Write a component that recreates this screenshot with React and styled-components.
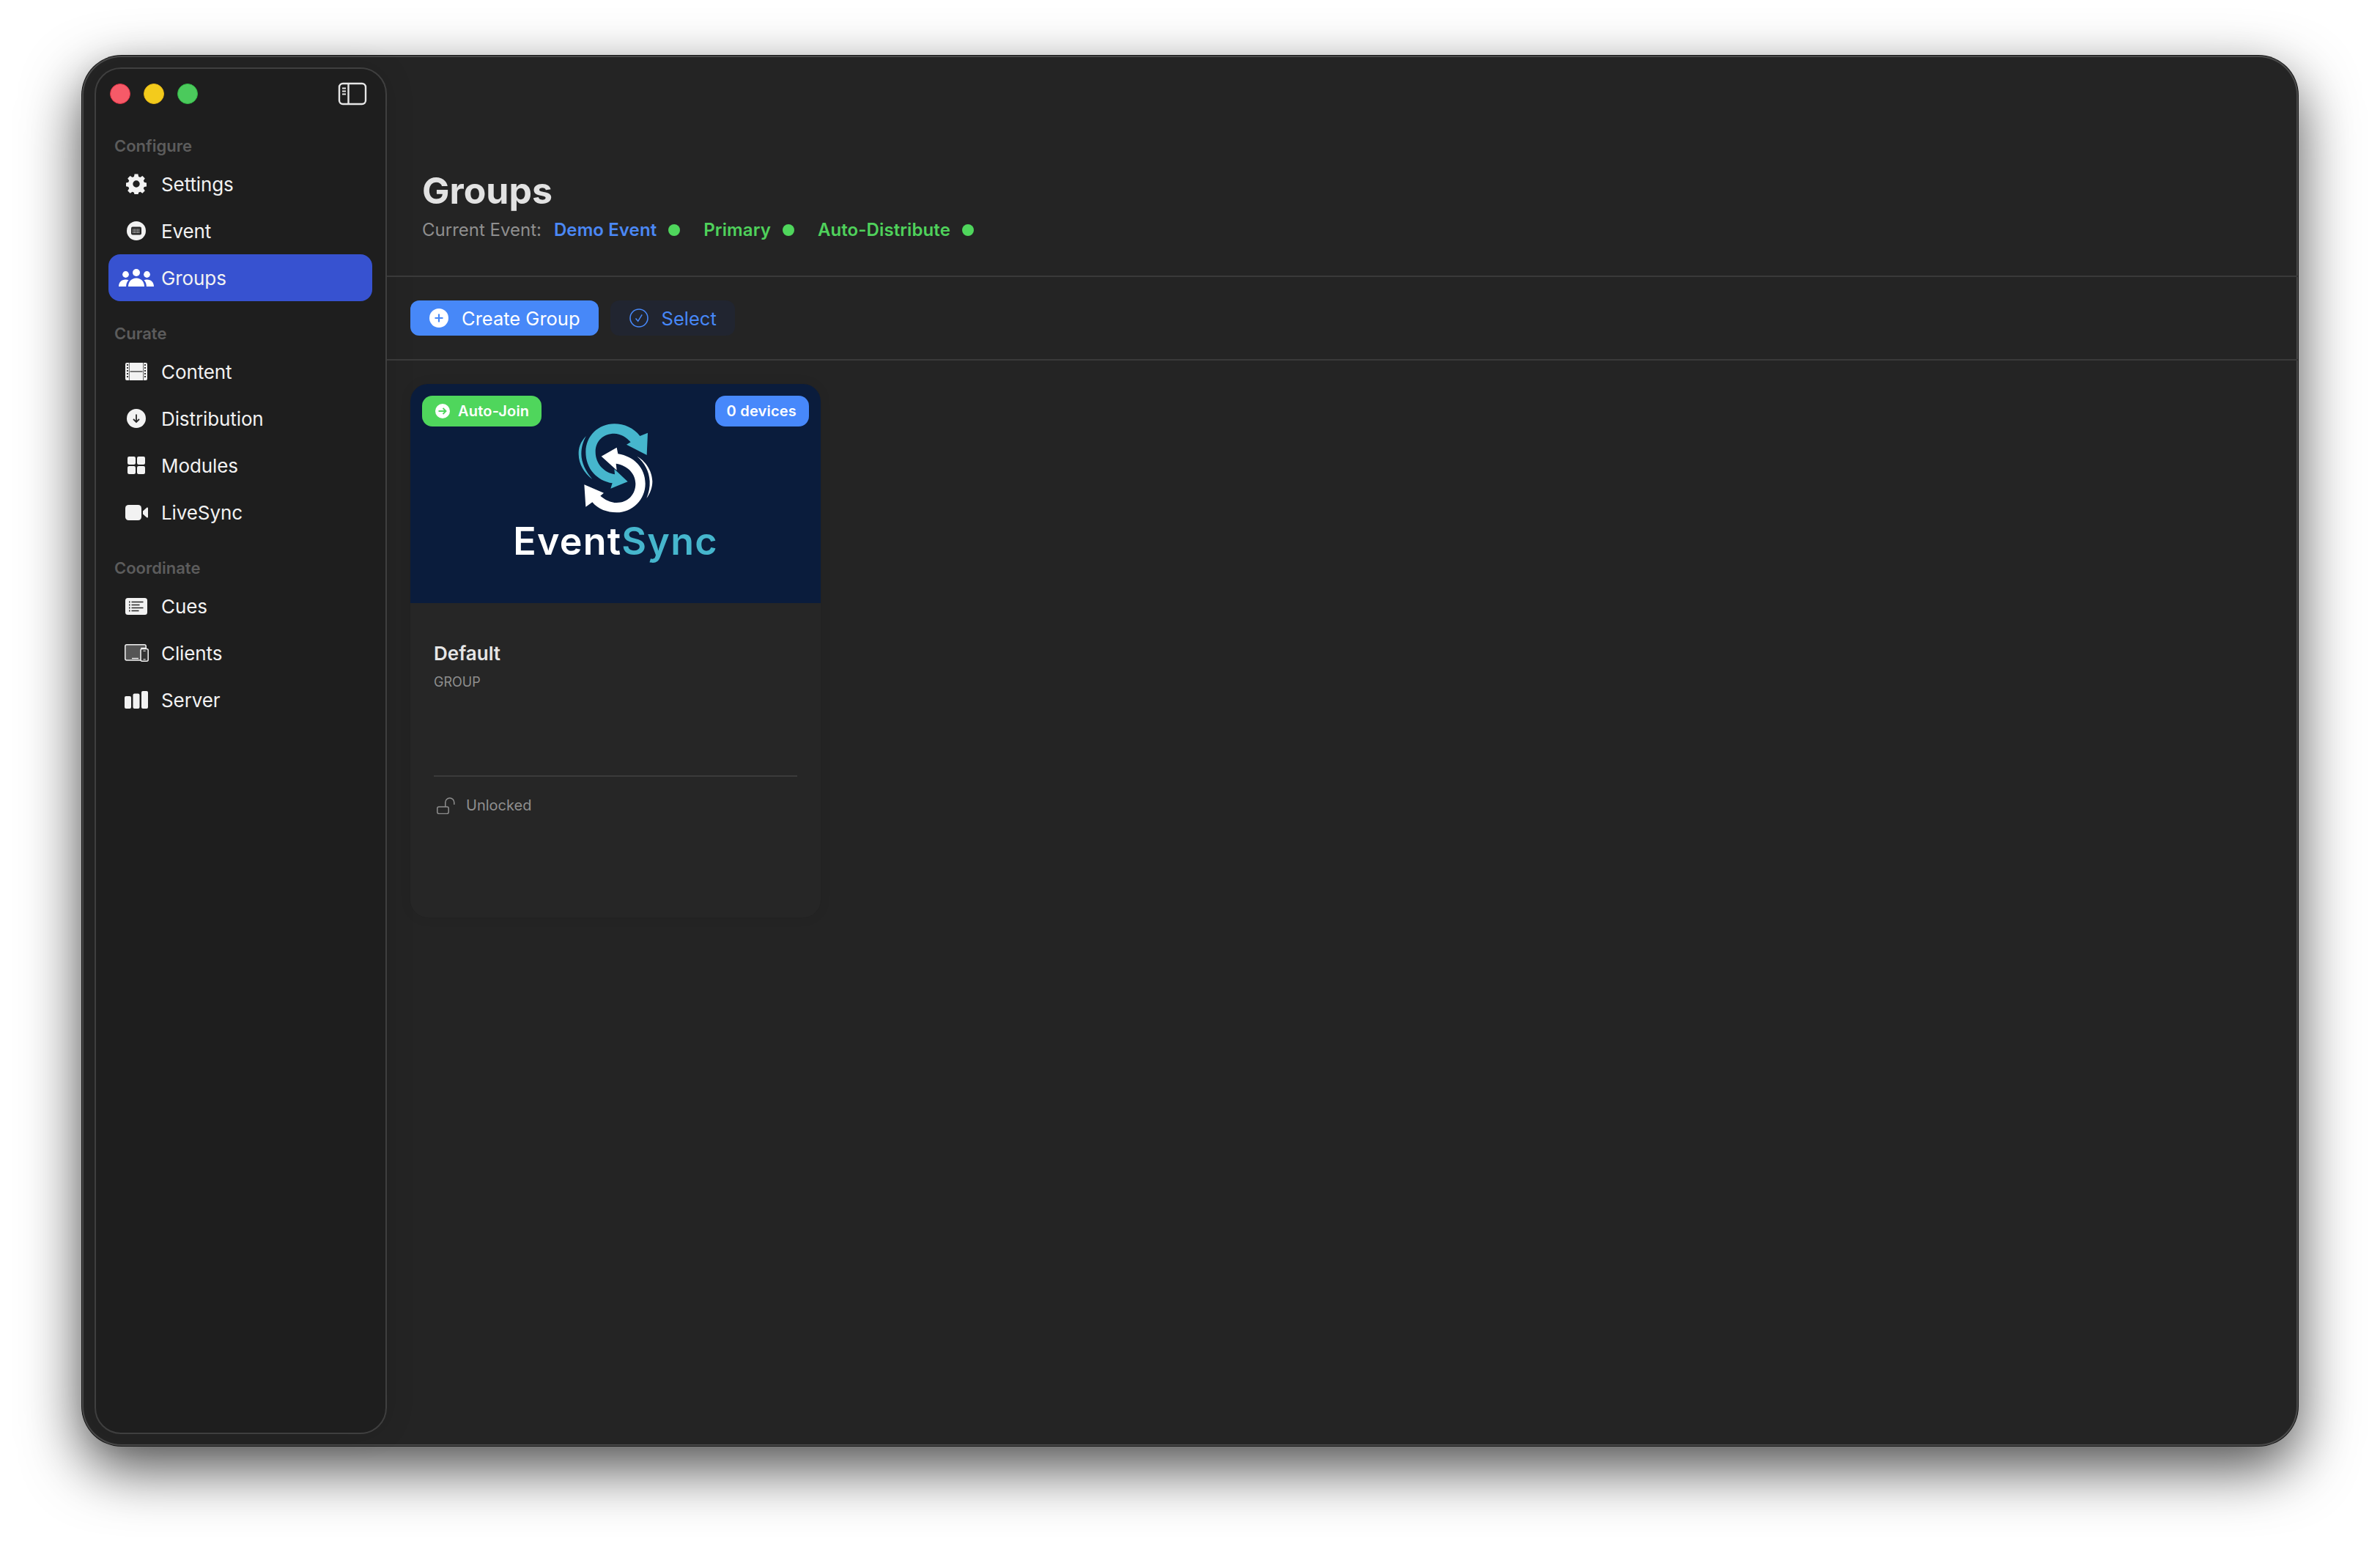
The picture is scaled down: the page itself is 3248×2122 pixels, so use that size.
import styled, { createGlobalStyle } from "styled-components";

const GlobalStyle = createGlobalStyle`
  html, body {
    margin: 0;
    background: #ffffff;
  }
  * {
    box-sizing: border-box;
  }
  #root {
    font-family: "Inter", "Liberation Sans", sans-serif;
    -webkit-font-smoothing: antialiased;
  }
`;

function SidebarToggle() {
  return (
    <svg width="40" height="32" viewBox="0 0 40 32" fill="none">
      <rect x="2" y="2" width="36" height="28" rx="5" stroke="#e6e6e6" strokeWidth="2.4" />
      <path d="M14.5 2v28" stroke="#e6e6e6" strokeWidth="2.4" />
      <path d="M6 8.5h5M6 12.5h5M6 16.500h5" stroke="#e6e6e6" strokeWidth="1.8" />
    </svg>
  );
}

function GearIcon() {
  return (
    <svg width="28" height="28" viewBox="0 0 28 28">
      <path
        fill="#f2f2f2"
        fillRule="evenodd"
        d="M11.6 .6h4.800l.7 3.500 2.300 1 3-2 3.400 3.400-2 3 1 2.300 3.600.7v4.800l-3.600.7-1 2.300 2 3-3.400 3.400-3-2-2.300 1-.7 3.600h-4.800l-.7-3.600-2.300-1-3 2-3.400-3.400 2-3-1-2.300-3.500-.7v-4.800l3.500-.7 1-2.300-2-3 3.400-3.400 3 2 2.300-1z M14 9.300a4.700 4.700 0 1 0 0 9.400a4.700 4.700 0 0 0 0-9.400z"
      />
    </svg>
  );
}

function EventIcon() {
  return (
    <svg width="26" height="26" viewBox="0 0 26 26">
      <circle cx="13" cy="13" r="13" fill="#f2f2f2" />
      <rect x="6" y="7.500" width="14" height="11" rx="2" fill="#2a2a2a" />
      <path d="M8 11h10M8 13.200h10M8 15.400h10" stroke="#d8d8d8" strokeWidth="1.200" strokeDasharray="1.300 .7" />
    </svg>
  );
}

function GroupsIcon() {
  return (
    <svg width="48" height="24" viewBox="0 0 48 24" fill="#ffffff">
      <circle cx="9.500" cy="7.500" r="4.400" />
      <circle cx="24" cy="5" r="5" />
      <circle cx="38.500" cy="7.500" r="4.400" />
      <path d="M0 24c0-5.500 3.500-9.500 9.500-9.500 1.500 0 2.900.3 4 .8-2.200 2-3.300 4.900-3.400 8.700z" />
      <path d="M13 24c0-6.500 4.500-11.500 11-11.500s11 5 11 11.500z" />
      <path d="M48 24c0-5.500-3.500-9.500-9.500-9.500-1.500 0-2.900.3-4 .8 2.200 2 3.300 4.900 3.400 8.700z" />
    </svg>
  );
}

function ContentIcon() {
  return (
    <svg width="30" height="24" viewBox="0 0 30 24">
      <rect width="30" height="24" rx="2" fill="#f2f2f2" />
      <path d="M3 2v20M27 2v20" stroke="#262626" strokeWidth="1.800" strokeDasharray="2 2" />
      <path d="M6.500 12h17" stroke="#262626" strokeWidth="1.200" />
      <path d="M5.400 0v24M24.600 0v24" stroke="#262626" strokeWidth=".7" />
    </svg>
  );
}

function DistributionIcon() {
  return (
    <svg width="26" height="26" viewBox="0 0 26 26">
      <circle cx="13" cy="13" r="13" fill="#f2f2f2" />
      <path d="M13 7.500v10M9 14l4 4 4-4" fill="none" stroke="#262626" strokeWidth="1.800" />
    </svg>
  );
}

function ModulesIcon() {
  return (
    <svg width="24" height="24" viewBox="0 0 24 24" fill="#f2f2f2">
      <rect width="11" height="11" rx="2.200" />
      <rect x="13" width="11" height="11" rx="2.200" />
      <rect y="13" width="11" height="11" rx="2.200" />
      <rect x="13" y="13" width="11" height="11" rx="2.200" />
    </svg>
  );
}

function LiveSyncIcon() {
  return (
    <svg width="31" height="21" viewBox="0 0 31 21" fill="#f2f2f2">
      <rect width="22" height="21" rx="4.500" />
      <path d="M24 8.500l5-4.500c1-.8 2-.4 2 .8v11.400c0 1.200-1 1.600-2 .8l-5-4.500z" />
    </svg>
  );
}

function CuesIcon() {
  return (
    <svg width="30" height="23" viewBox="0 0 30 23">
      <rect width="30" height="23" rx="3.500" fill="#f2f2f2" />
      <path d="M5 5.500h1.500M5 9.500h1.500M5 13.500h1.500M5 17.500h1.500" stroke="#262626" strokeWidth="2" />
      <path d="M8.500 5.500h16M8.500 9.500h11M8.500 13.500h16M8.500 17.500h10" stroke="#262626" strokeWidth="1.400" />
    </svg>
  );
}

function ClientsIcon() {
  return (
    <svg width="33" height="24" viewBox="0 0 33 24">
      <path d="M3 .8h24c1.300 0 2.200 1 2.200 2.200v2.500h-6.200v16.500H3c-1.300 0-2.200-1-2.200-2.200V3C.8 1.800 1.700.8 3 .8z" fill="#555" stroke="#f2f2f2" strokeWidth="1.500" />
      <path d="M10 19.500h9" stroke="#f2f2f2" strokeWidth="1.400" />
      <rect x="22" y="6.500" width="10.200" height="16.700" rx="2" fill="#333" stroke="#f2f2f2" strokeWidth="1.500" />
      <path d="M25.500 9.200h3.200M25.500 20.700h3.200" stroke="#f2f2f2" strokeWidth="1.100" />
    </svg>
  );
}

function ServerIcon() {
  return (
    <svg width="32" height="24" viewBox="0 0 32 24" fill="#f2f2f2">
      <rect y="7" width="9" height="17" rx="2" />
      <rect x="11.500" y="3.500" width="9" height="20.500" rx="2" />
      <rect x="23" width="9" height="24" rx="2" />
    </svg>
  );
}

function PlusCircleIcon() {
  return (
    <svg width="26" height="26" viewBox="0 0 26 26">
      <circle cx="13" cy="13" r="13" fill="#ffffff" />
      <path d="M13 7.500v11M7.500 13h11" stroke="#4788f8" strokeWidth="2.200" />
    </svg>
  );
}

function CheckCircleIcon() {
  return (
    <svg width="26" height="26" viewBox="0 0 26 26" fill="none" stroke="#4788f8">
      <circle cx="13" cy="13" r="12" strokeWidth="1.600" />
      <path d="M8.500 13.500l3.200 3.800 5.500-9" strokeWidth="1.500" />
    </svg>
  );
}

function JoinIcon() {
  return (
    <svg width="20" height="20" viewBox="0 0 20 20">
      <circle cx="10" cy="10" r="10" fill="#ffffff" />
      <path d="M4.500 10h10M10.500 6l4 4-4 4" fill="none" stroke="#4fd65c" strokeWidth="1.900" />
    </svg>
  );
}

function LockIcon() {
  return (
    <svg width="25" height="23" viewBox="0 0 25 23" fill="none" stroke="#8f8f8f" strokeWidth="1.500">
      <rect x=".8" y="13" width="15.400" height="9.400" rx="2.200" />
      <path d="M11.800 13V7a6 6 0 0 1 12 0v3" />
    </svg>
  );
}

function LogoMark() {
  return (
    <svg width="200" height="150" viewBox="0 0 600 450">
      <g fill="#46b6cd">
        <path d="M400 105C375 72 335 55 295 55C230 55 178 105 178 170C178 240 225 288 287 298L280 320L350 292L295 240L297 262C255 255 218 220 218 170C218 125 250 95 295 95C320 95 345 110 362 130L345 140L428 183L432 92Z" />
        <path d="M180 105C155 130 148 155 149 180C150 220 170 255 205 282C178 250 160 215 160 178C160 150 168 125 180 105Z" />
      </g>
      <g fill="#ffffff">
        <path d="M205 376C230 405 265 418 305 418C370 418 422 365 422 300C422 235 375 188 310 178L305 152L242 188L305 245L302 218C350 225 382 260 382 300C382 345 350 378 305 378C280 378 255 365 238 350L252 338L172 304L178 395Z" />
        <path d="M388 188C420 205 450 245 451 290C451 315 442 340 427 360C437 335 441 315 440 290C438 250 420 215 388 188Z" />
      </g>
    </svg>
  );
}

const NAV_SECTIONS = [
  {
    title: "Configure",
    items: [
      { label: "Settings", icon: GearIcon },
      { label: "Event", icon: EventIcon },
      { label: "Groups", icon: GroupsIcon, active: true },
    ],
  },
  {
    title: "Curate",
    items: [
      { label: "Content", icon: ContentIcon },
      { label: "Distribution", icon: DistributionIcon },
      { label: "Modules", icon: ModulesIcon },
      { label: "LiveSync", icon: LiveSyncIcon },
    ],
  },
  {
    title: "Coordinate",
    items: [
      { label: "Cues", icon: CuesIcon },
      { label: "Clients", icon: ClientsIcon },
      { label: "Server", icon: ServerIcon },
    ],
  },
];

export default function App() {
  return (
    <>
      <GlobalStyle />
      <Page>
        <Window>
          <Sidebar>
            <TitleBar>
              <Lights>
                <Light $fill="#f65a68" $edge="#dc3044" />
                <Light $fill="#f3cb1c" $edge="#e3b414" />
                <Light $fill="#4bca5c" $edge="#30b544" />
              </Lights>
              <SidebarToggle />
            </TitleBar>
            {NAV_SECTIONS.map((section) => (
              <NavSection key={section.title}>
                <SectionTitle>{section.title}</SectionTitle>
                {section.items.map((item) => (
                  <NavItem key={item.label} $active={item.active}>
                    <NavIcon>
                      <item.icon />
                    </NavIcon>
                    {item.label}
                  </NavItem>
                ))}
              </NavSection>
            ))}
          </Sidebar>

          <Main>
            <Header>
              <Title>Groups</Title>
              <StatusRow>
                <Muted>Current Event:</Muted>
                <Status $color="#4b88f5">
                  Demo Event
                  <Dot />
                </Status>
                <Status $color="#4fd15b">
                  Primary
                  <Dot />
                </Status>
                <Status $color="#4fd15b">
                  Auto-Distribute
                  <Dot />
                </Status>
              </StatusRow>
            </Header>

            <Toolbar>
              <PrimaryButton>
                <PlusCircleIcon />
                Create Group
              </PrimaryButton>
              <GhostButton>
                <CheckCircleIcon />
                Select
              </GhostButton>
            </Toolbar>

            <CardGrid>
              <Card>
                <Cover>
                  <Badge $bg="#4fd65c" $left>
                    <JoinIcon />
                    Auto-Join
                  </Badge>
                  <Badge $bg="#4788fb">0 devices</Badge>
                  <LogoMark />
                  <Wordmark>
                    Event<span>Sync</span>
                  </Wordmark>
                </Cover>
                <CardBody>
                  <CardInfo>
                    <CardName>Default</CardName>
                    <CardKind>GROUP</CardKind>
                  </CardInfo>
                  <CardFooter>
                    <LockIcon />
                    Unlocked
                  </CardFooter>
                </CardBody>
              </Card>
            </CardGrid>
          </Main>
        </Window>
      </Page>
    </>
  );
}

const Page = styled.div`
  width: 3248px;
  height: 2122px;
  padding: 76px 112px 0;
  background: #ffffff;
  overflow: hidden;
`;

const Window = styled.div`
  display: flex;
  width: 3024px;
  height: 1897px;
  padding: 16px 0 16px 17px;
  background: #242424;
  border-radius: 54px;
  box-shadow:
    inset 0 0 0 2px #4a4a4a,
    0 0 0 1px #111111,
    0 30px 80px rgba(0, 0, 0, 0.7);
`;

const Sidebar = styled.aside`
  display: flex;
  flex-direction: column;
  flex: 0 0 399px;
  padding: 19px 18px 0 17px;
  background: #1e1e1e;
  border: 2px solid #3f3f3f;
  border-radius: 36px;
  box-shadow: 0 0 40px rgba(0, 0, 0, 0.12);
`;

const TitleBar = styled.div`
  display: flex;
  align-items: center;
  justify-content: space-between;
  height: 30px;
  padding: 0 7px 0 2px;
`;

const Lights = styled.div`
  display: flex;
  gap: 18px;
`;

const Light = styled.span`
  width: 28px;
  height: 28px;
  border-radius: 50%;
  background: ${(p) => p.$fill};
  border: 1px solid ${(p) => p.$edge};
`;

const NavSection = styled.nav`
  display: flex;
  flex-direction: column;
  margin-top: 31px;

  ${TitleBar} + & {
    margin-top: 43px;
  }
`;

const SectionTitle = styled.div`
  height: 26px;
  margin-bottom: 7px;
  padding-left: 8px;
  font-size: 22px;
  line-height: 26px;
  font-weight: 600;
  color: #5c5c5c;
`;

const NavItem = styled.a`
  display: flex;
  align-items: center;
  gap: 2px;
  height: 64px;
  padding-left: 6px;
  border-radius: 16px;
  font-size: 26px;
  letter-spacing: -0.1px;
  color: #f2f2f2;
  background: ${(p) => (p.$active ? "#3752d0" : "transparent")};
`;

const NavIcon = styled.span`
  display: flex;
  align-items: center;
  justify-content: center;
  width: 64px;
  height: 100%;
  flex: none;
`;

const Main = styled.main`
  display: flex;
  flex-direction: column;
  flex: 1;
  min-width: 0;
  margin-top: -16px;
`;

const Header = styled.header`
  height: 302px;
  padding: 154px 0 0 48px;
  border-bottom: 2px solid #3a3a3a;
`;

const Title = styled.h1`
  margin: 0;
  font-size: 50px;
  line-height: 60px;
  font-weight: 700;
  color: #e2e2e2;
`;

const StatusRow = styled.div`
  display: flex;
  align-items: center;
  margin-top: 9px;
  font-size: 24px;
  line-height: 30px;
`;

const Muted = styled.span`
  margin-right: 17px;
  color: #8f8f8f;
`;

const Status = styled.span`
  display: flex;
  align-items: center;
  gap: 16px;
  margin-right: 32px;
  font-weight: 600;
  letter-spacing: 0.1px;
  color: ${(p) => p.$color};
`;

const Dot = styled.i`
  width: 16px;
  height: 16px;
  border-radius: 50%;
  background: #4fd65c;
`;

const Toolbar = styled.div`
  display: flex;
  align-items: center;
  gap: 16px;
  height: 114px;
  padding: 0 32px;
  border-bottom: 2px solid #3a3a3a;
`;

const PrimaryButton = styled.button`
  display: flex;
  align-items: center;
  gap: 18px;
  height: 48px;
  padding: 0 25px 0 26px;
  border: 0;
  border-radius: 12px;
  font: inherit;
  font-size: 25.5px;
  color: #ffffff;
  background: #4788f8;
`;

const GhostButton = styled(PrimaryButton)`
  color: #4788f8;
  background: #212530;
`;

const CardGrid = styled.div`
  display: grid;
  grid-template-columns: repeat(auto-fill, 560px);
  padding: 32px;
`;

const Card = styled.article`
  display: flex;
  flex-direction: column;
  height: 728px;
  background: #262626;
  border-radius: 24px;
  box-shadow: 0 0 16px rgba(0, 0, 0, 0.08);
  overflow: hidden;
`;

const Cover = styled.div`
  position: relative;
  display: flex;
  flex-direction: column;
  align-items: center;
  height: 299px;
  padding-top: 36px;
  background: #0a1c3c;
`;

const Badge = styled.span`
  position: absolute;
  top: 16px;
  ${(p) => (p.$left ? "left: 16px;" : "right: 16px;")}
  display: flex;
  align-items: center;
  gap: 11px;
  height: 42px;
  padding: 0 17px 0 ${(p) => (p.$left ? "18px" : "16px")};
  border-radius: 14px;
  font-size: 20px;
  font-weight: 600;
  letter-spacing: 0.2px;
  color: #ffffff;
  background: ${(p) => p.$bg};
`;

const Wordmark = styled.div`
  margin-top: -1px;
  font-family: "Inter", sans-serif;
  font-size: 52px;
  line-height: 60px;
  font-weight: 600;
  letter-spacing: 1.2px;
  color: #ffffff;

  span {
    color: #46b6cd;
  }
`;

const CardBody = styled.div`
  display: flex;
  flex-direction: column;
  flex: 1;
  padding: 53px 32px 0;
`;

const CardInfo = styled.div`
  height: 184px;
  border-bottom: 2px solid #3b3b3b;
`;

const CardName = styled.div`
  font-size: 26px;
  line-height: 32px;
  font-weight: 600;
  color: #e6e6e6;
`;

const CardKind = styled.div`
  margin-top: 12px;
  font-size: 18px;
  line-height: 22px;
  color: #8e8e8e;
`;

const CardFooter = styled.div`
  display: flex;
  align-items: center;
  gap: 15px;
  margin-top: 27px;
  padding-left: 4px;
  font-size: 20px;
  line-height: 24px;
  color: #8f8f8f;
`;
